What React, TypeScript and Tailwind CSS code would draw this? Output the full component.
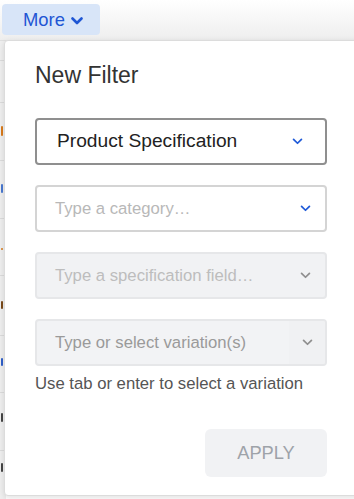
const font = { fontFamily: '"Liberation Sans", Arial, sans-serif' };

const Chevron = ({ className }: { className?: string }) => (
  <svg viewBox="0 0 12 8" fill="none" stroke="currentColor" strokeWidth={2} className={className}>
    <path d="M1.5 1.5 6 6l4.5-4.5" strokeLinecap="round" strokeLinejoin="round" />
  </svg>
);

// slivers of the page behind the popup, only their right edges show at x 0..4
const rows: { top: number; mark?: { y: number; h: number; color: string } }[] = [
  { top: 60 },
  { top: 102, mark: { y: 23, h: 10, color: "#d97a1a" } },
  { top: 160, mark: { y: 23, h: 9, color: "#4a78d0" } },
  { top: 218, mark: { y: 29, h: 2, color: "#d97a1a" } },
  { top: 275, mark: { y: 25, h: 8, color: "#7a4a1a" } },
  { top: 335, mark: { y: 22, h: 8, color: "#2f5fc9" } },
  { top: 392, mark: { y: 20, h: 9, color: "#444" } },
  { top: 450, mark: { y: 12, h: 9, color: "#444" } },
];

function Field({
  text,
  tone,
}: {
  text: string;
  tone: "active" | "empty" | "disabled" | "variation";
}) {
  if (tone === "active") {
    return (
      <div className="flex h-[47px] items-center rounded-[4px] border-2 border-[#8f8f8f] bg-white pl-[20px] pr-[22px]">
        <span className="flex-1 text-[19.2px] text-[#222]">{text}</span>
        <Chevron className="h-[7px] w-[11px] text-[#1f5ad8]" />
      </div>
    );
  }
  if (tone === "empty") {
    return (
      <div className="flex h-[47px] items-center rounded-[4px] border-2 border-[#d4d4d4] bg-white pl-[18px] pr-[14px]">
        <span className="flex-1 text-[16.7px] text-[#b8b8b8]">{text}</span>
        <Chevron className="h-[7px] w-[11px] text-[#1f5ad8]" />
      </div>
    );
  }
  if (tone === "disabled") {
    return (
      <div className="flex h-[47px] items-center rounded-[4px] border-2 border-[#e6e7e9] bg-[#f1f2f4] pl-[18px] pr-[14px]">
        <span className="flex-1 text-[16.7px] text-[#bdbdbd]">{text}</span>
        <Chevron className="h-[7px] w-[11px] text-[#8f8f8f]" />
      </div>
    );
  }
  return (
    <div className="flex h-[47px] items-stretch overflow-hidden rounded-[4px] border-2 border-[#e6e7e9] bg-[#f2f3f5]">
      <span className="flex flex-1 items-center pl-[18px] text-[16.7px] text-[#9a9a9a]">{text}</span>
      <span className="flex w-[36px] items-center justify-center bg-[#f0f1f3]">
        <Chevron className="h-[7px] w-[11px] text-[#8f8f8f]" />
      </span>
    </div>
  );
}

export default function App() {
  return (
    <div style={font} className="relative h-[499px] w-[354px] overflow-hidden bg-white">
      <header className="h-[41px] border-b border-[#e0e0e0] bg-gradient-to-b from-white to-[#eeeeee] pl-[2px] pt-[4px]">
        <button className="flex h-[31px] w-[98px] items-center gap-[6px] rounded-[4px] bg-[#d8e5f8] pl-[21px] text-[18.4px] text-[#1f56d4]">
          More
          <Chevron className="mt-[2px] h-[8px] w-[12px] [stroke-width:2.6]" />
        </button>
      </header>

      <div className="absolute left-0 top-[41px] h-[458px] w-[6px] bg-[#efefef]">
        {rows.map((r) => (
          <div
            key={r.top}
            className="absolute left-0 h-[57px] w-[4px] border-t border-[#dcdcdc]"
            style={{ top: r.top - 41 }}
          >
            {r.mark && (
              <span
                className="absolute right-[1px] w-[2px] rounded-[1px]"
                style={{ top: r.mark.y, height: r.mark.h, background: r.mark.color }}
              />
            )}
          </div>
        ))}
      </div>

      <div className="absolute left-[4px] top-[40px] w-[380px] rounded-l-[4px] border border-[#dcdcdc] bg-white pb-[18px] pl-[30px] pt-[20px] shadow-[0_2px_6px_rgba(0,0,0,0.12)]">
        <h2 className="text-[23px] leading-[28px] text-[#333]">New Filter</h2>
        <div className="mt-[29px] flex w-[292px] flex-col gap-[20px]">
          <Field tone="active" text="Product Specification" />
          <Field tone="empty" text="Type a category…" />
          <Field tone="disabled" text="Type a specification field…" />
          <Field tone="variation" text="Type or select variation(s)" />
        </div>
        <p className="mt-[8px] text-[16.7px] leading-[20px] text-[#555]">
          Use tab or enter to select a variation
        </p>
        <div className="mt-[35px] flex w-[292px] justify-end">
          <button className="h-[48px] w-[122px] rounded-[6px] bg-[#f1f2f4] text-[18.3px] text-[#9ea3a9]">
            APPLY
          </button>
        </div>
      </div>
    </div>
  );
}
